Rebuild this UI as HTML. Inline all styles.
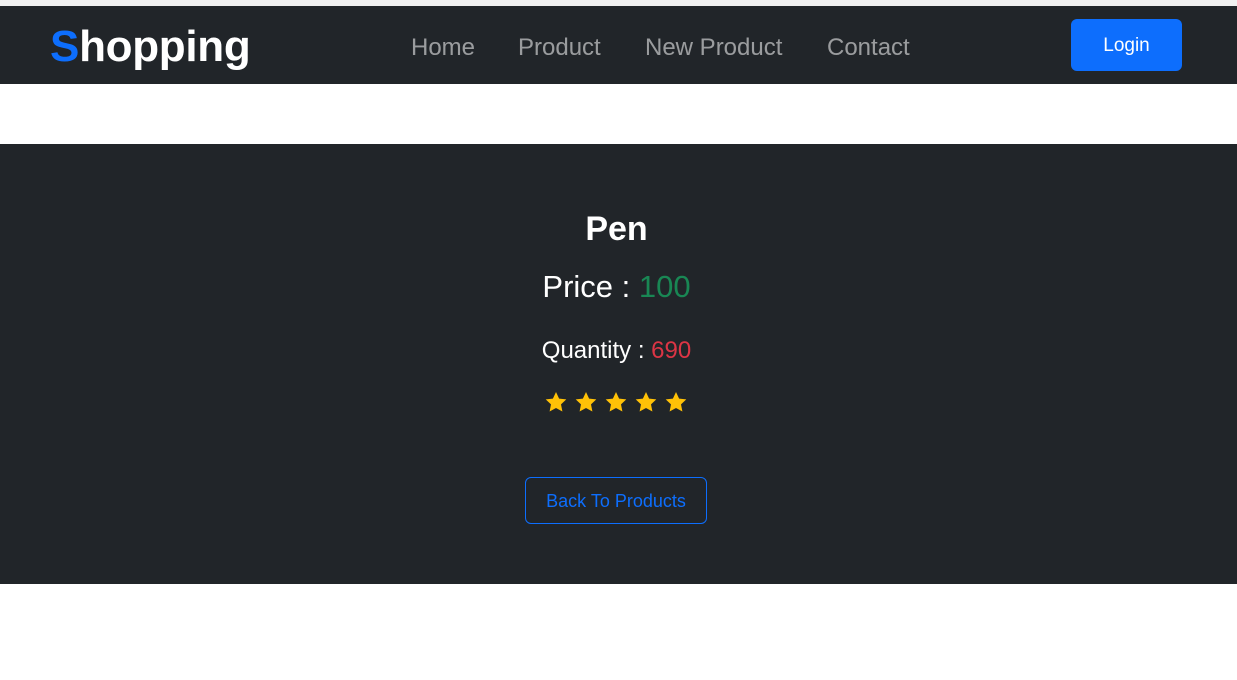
<!DOCTYPE html>
<html><head><style>
body{margin:0;width:1237px;height:680px;background:#fff;font-family:"Liberation Sans",sans-serif;position:relative;overflow:hidden}
.top{position:absolute;top:0;left:0;right:0;height:6px;background:#f0f0f0}
nav{position:absolute;top:6px;left:0;right:0;height:78px;background:#212529}
.logo{position:absolute;left:50px;top:16px;font-size:44px;font-weight:bold;color:#fff;line-height:50px;letter-spacing:-0.3px}
.logo span{color:#0d6efd}
.links{position:absolute;top:28px;left:411px;font-size:24px;color:rgba(255,255,255,.55);line-height:28px;white-space:nowrap}
.links a{position:absolute;top:0}
.login{position:absolute;left:1071px;top:13px;width:111px;height:52px;background:#0d6efd;border-radius:6px;color:#fff;font-size:19px;text-align:center;line-height:54px}
.sec{position:absolute;top:144px;left:0;right:0;height:440px;background:#212529;color:#fff;text-align:center}
.t{position:absolute;left:0;right:0}
.btn{position:absolute;left:525px;top:333px;width:182px;height:47px;border:1px solid #0d6efd;border-radius:6px;color:#0d6efd;font-size:18px;line-height:47px;box-sizing:border-box}
</style></head><body>
<div class="top"></div>
<nav>
<div class="logo"><span>S</span>hopping</div>
<div class="links"><a style="left:0">Home</a><a style="left:107px">Product</a><a style="left:234px">New Product</a><a style="left:416px">Contact</a></div>
<div class="login">Login</div>
</nav>
<div class="sec">
<div class="t" style="top:65px;font-size:34px;font-weight:bold;line-height:40px;margin-left:-4px">Pen</div>
<div class="t" style="top:124px;font-size:31px;line-height:38px;margin-left:-4px">Price : <span style="color:#198754">100</span></div>
<div class="t" style="top:192px;font-size:24px;line-height:30px;margin-left:-4px">Quantity : <span style="color:#dc3545">690</span></div>
<svg style="position:absolute;left:544px;top:247px" width="146" height="22" viewBox="0 0 146 22">
<g fill="#ffc107">
<path id="s" d="M12 1l3.1 6.6 7.2.8-5.3 5 1.4 7.1L12 17l-6.4 3.5 1.4-7.1-5.3-5 7.2-.8z"/>
<use href="#s" x="30"/><use href="#s" x="60"/><use href="#s" x="90"/><use href="#s" x="120"/>
</g></svg>
<div class="btn">Back To Products</div>
</div>
</body></html>
